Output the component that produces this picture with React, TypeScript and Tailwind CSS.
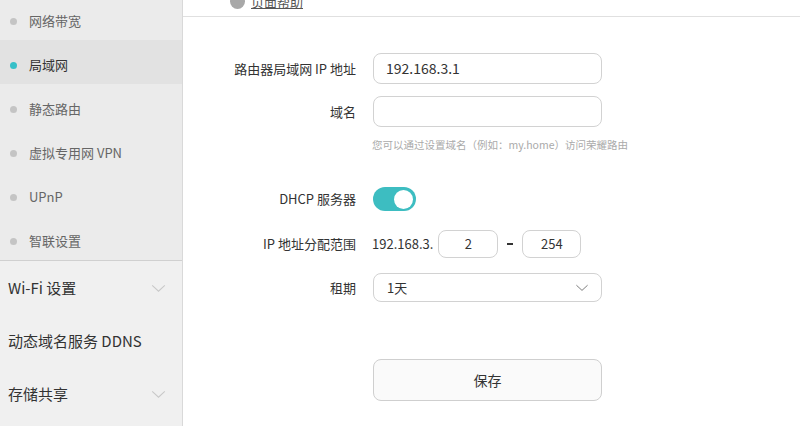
const subItems = [
  { label: '网络带宽', active: false },
  { label: '局域网', active: true },
  { label: '静态路由', active: false },
  { label: '虚拟专用网 VPN', active: false },
  { label: 'UPnP', active: false },
  { label: '智联设置', active: false },
];

const mainItems = [
  { label: 'Wi-Fi 设置', expand: true },
  { label: '动态域名服务 DDNS', expand: false },
  { label: '存储共享', expand: true },
];

function Chevron({ className }: { className?: string }) {
  return (
    <svg viewBox="0 0 16 10" className={className} fill="none" stroke="currentColor" strokeWidth="1.2">
      <path d="M1 1.5 L8 8 L15 1.5" />
    </svg>
  );
}

export default function App() {
  return (
    <div
      className="flex w-[800px] h-[426px] overflow-hidden bg-white text-[#333]"
      style={{ fontFamily: '"Noto Sans CJK SC", "Noto Sans", sans-serif' }}
    >
      <aside className="w-[183px] shrink-0 bg-[#f0f0f0] border-r border-[#d9d9d9] flex flex-col">
        <div className="-mt-[4px] bg-[#ebebeb] border-b border-[#d0d0d0]">
          {subItems.map((it) => (
            <div
              key={it.label}
              className={`h-[44px] flex items-center pt-[6px] pl-[10px] ${it.active ? 'bg-[#e2e2e2]' : ''}`}
            >
              <span
                className={`w-[7px] h-[7px] rounded-full ${it.active ? 'bg-[#36c0c8]' : 'bg-[#c4c4c4]'}`}
              />
              <span className={`ml-[12px] text-[13px] ${it.active ? 'text-[#333]' : 'text-[#666]'}`}>
                {it.label}
              </span>
            </div>
          ))}
        </div>
        {mainItems.map((it) => (
          <div key={it.label} className="h-[53px] flex items-center pl-[8px] pr-[16px] pt-[1px]">
            <span className="text-[15px] text-[#333] flex-1">{it.label}</span>
            {it.expand && <Chevron className="w-[15px] h-[9px] text-[#c8c8c8]" />}
          </div>
        ))}
      </aside>

      <main className="flex-1 flex flex-col">
        <div className="h-[17px] border-b border-[#e0e0e0] overflow-hidden">
          <div className="-mt-[8px] ml-[47px] flex items-center gap-[6px]">
            <span className="w-[15px] h-[15px] rounded-full bg-[#a8a8a8]" />
            <span className="text-[13px] text-[#555] underline">页面帮助</span>
          </div>
        </div>

        <div className="flex items-center mt-[36px]">
          <label className="w-[173px] text-right text-[13px] text-[#333]">路由器局域网 IP 地址</label>
          <div className="ml-[17px] w-[229px] h-[31px] rounded-[8px] border border-[#d2d2d2] flex items-center px-[12px] text-[14px] text-[#333]">
            192.168.3.1
          </div>
        </div>

        <div className="flex items-center mt-[12px]">
          <label className="w-[173px] text-right text-[13px] text-[#333]">域名</label>
          <div className="ml-[17px] w-[229px] h-[31px] rounded-[8px] border border-[#d2d2d2]" />
        </div>

        <div className="ml-[189px] mt-[10px] text-[10.5px] leading-[16px] text-[#aaa]">
          您可以通过设置域名（例如：my.home）访问荣耀路由
        </div>

        <div className="flex items-center mt-[34px]">
          <label className="w-[173px] text-right text-[13px] text-[#333]">DHCP 服务器</label>
          <div className="ml-[17px] w-[43px] h-[24px] rounded-full bg-[#3dbdc1] flex items-center justify-end pr-[3px]">
            <span className="w-[19px] h-[19px] rounded-full bg-white" />
          </div>
        </div>

        <div className="flex items-center mt-[19px]">
          <label className="w-[173px] text-right text-[13px] text-[#333]">IP 地址分配范围</label>
          <span className="ml-[16px] text-[13px] text-[#333]">192.168.3.</span>
          <div className="ml-[5px] w-[60px] h-[28px] rounded-[8px] border border-[#d2d2d2] flex items-center justify-center text-[13px]">
            2
          </div>
          <span className="mx-[9px] w-[6px] h-[2px] bg-[#333]" />
          <div className="w-[59px] h-[28px] rounded-[8px] border border-[#d2d2d2] flex items-center justify-center text-[13px]">
            254
          </div>
        </div>

        <div className="flex items-center mt-[15px]">
          <label className="w-[173px] text-right text-[13px] text-[#333]">租期</label>
          <div className="ml-[17px] w-[229px] h-[29px] rounded-[8px] border border-[#d2d2d2] flex items-center pl-[13px] pr-[12px] text-[13px]">
            <span className="flex-1">1天</span>
            <Chevron className="w-[14px] h-[8px] text-[#777]" />
          </div>
        </div>

        <div className="ml-[190px] mt-[57px] w-[229px] h-[42px] rounded-[8px] border border-[#cfcfcf] bg-[#fafafa] flex items-center justify-center text-[14px] text-[#333]">
          保存
        </div>
      </main>
    </div>
  );
}
